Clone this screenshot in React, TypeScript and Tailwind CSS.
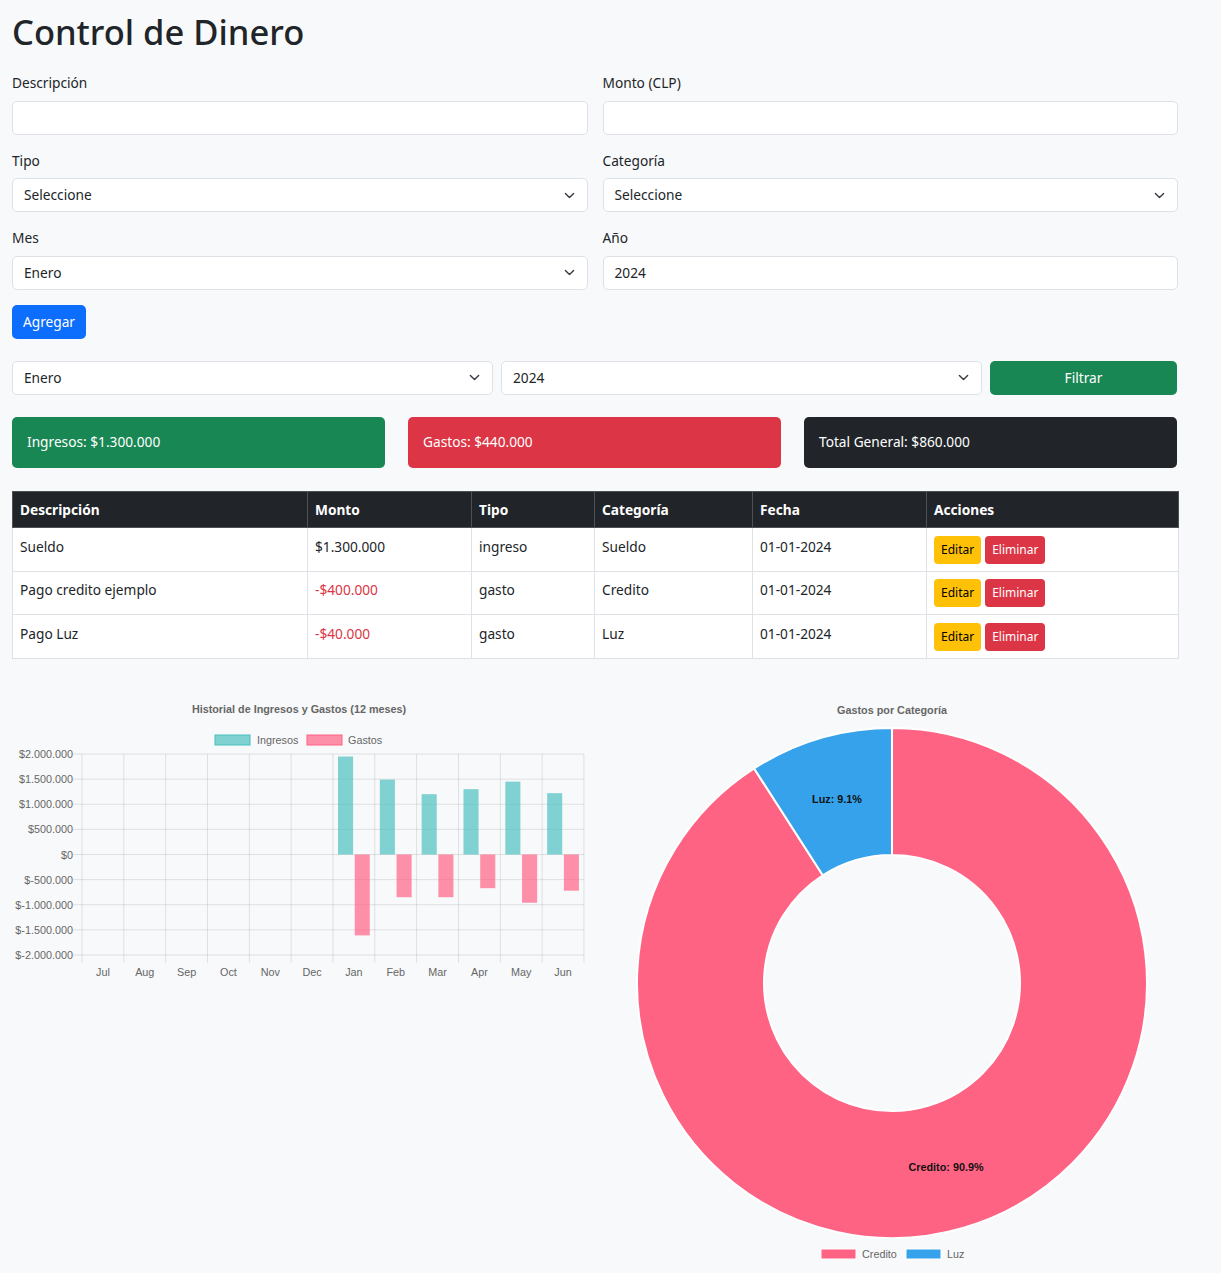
import React from "react";

const months = ["Jul", "Aug", "Sep", "Oct", "Nov", "Dec", "Jan", "Feb", "Mar", "Apr", "May", "Jun"];
const ingresos = [0, 0, 0, 0, 0, 0, 1950000, 1490000, 1200000, 1300000, 1450000, 1220000];
const gastos = [0, 0, 0, 0, 0, 0, 1610000, 850000, 850000, 670000, 960000, 720000];
const yTicks = ["$2.000.000", "$1.500.000", "$1.000.000", "$500.000", "$0", "$-500.000", "$-1.000.000", "$-1.500.000", "$-2.000.000"];

const rows = [
    { desc: "Sueldo", monto: "$1.300.000", neg: false, tipo: "ingreso", cat: "Sueldo", fecha: "01-01-2024" },
    { desc: "Pago credito ejemplo", monto: "-$400.000", neg: true, tipo: "gasto", cat: "Credito", fecha: "01-01-2024" },
    { desc: "Pago Luz", monto: "-$40.000", neg: true, tipo: "gasto", cat: "Luz", fecha: "01-01-2024" },
];

function Chevron() {
    return (
        <svg width="11" height="11" viewBox="0 0 16 16" className="shrink-0">
            <path d="M2 5l6 6 6-6" fill="none" stroke="#343a40" strokeWidth="2" strokeLinecap="round" strokeLinejoin="round" />
        </svg>
    );
}

function Field({ label, children }: { label: string; children: React.ReactNode }) {
    return (
        <div className="mb-[15px]">
            <label className="block text-[13.7px] leading-[21.6px] mb-[7px]">{label}</label>
            {children}
        </div>
    );
}

function Select({ value, className = "" }: { value: string; className?: string }) {
    return (
        <div className={`h-[34px] bg-white border border-[#dee2e6] rounded-[5px] flex items-center justify-between pl-[11px] pr-[12px] text-[13.7px] ${className}`}>
            <span>{value}</span>
            <Chevron />
        </div>
    );
}

function Input({ value = "" }: { value?: string }) {
    return (
        <div className="h-[34px] bg-white border border-[#dee2e6] rounded-[5px] flex items-center px-[11px] text-[13.7px]">
            {value}
        </div>
    );
}

function BarChart() {
    const left = 70;
    const step = 41.83;
    const zero = 154.5;
    const y = (v: number) => zero - (v / 500000) * 25.125;
    const font = "'Liberation Sans', Arial, sans-serif";
    return (
        <svg width="575" height="290" style={{ fontFamily: font }}>
            <text x="287" y="13" textAnchor="middle" fontSize="10.8" fontWeight="bold" fill="#666">
                Historial de Ingresos y Gastos (12 meses)
            </text>
            <rect x="203" y="35" width="35" height="10" fill="rgba(75,192,192,0.7)" stroke="rgb(75,192,192)" strokeWidth="1" />
            <text x="245" y="44" fontSize="10.8" fill="#666">Ingresos</text>
            <rect x="295" y="35" width="35" height="10" fill="rgba(255,99,132,0.7)" stroke="rgb(255,99,132)" strokeWidth="1" />
            <text x="336" y="44" fontSize="10.8" fill="#666">Gastos</text>
            {yTicks.map((t, i) => {
                const yy = 54 + i * 25.125;
                return (
                    <g key={t}>
                        <line x1="61" x2="572" y1={yy} y2={yy} stroke="rgba(0,0,0,0.1)" />
                        <text x="61" y={yy + 4} textAnchor="end" fontSize="10.8" fill="#666">{t}</text>
                    </g>
                );
            })}
            {Array.from({ length: 13 }).map((_, i) => (
                <line key={i} x1={left + step * i} x2={left + step * i} y1="54" y2="263" stroke="rgba(0,0,0,0.1)" />
            ))}
            {months.map((m, i) => {
                const c0 = left + step * i;
                const w = 15.06;
                const b1 = c0 + step * 0.1;
                const b2 = b1 + step * 0.4;
                return (
                    <g key={m}>
                        {ingresos[i] > 0 && (
                            <rect x={b1 + (step * 0.4 - w) / 2} y={y(ingresos[i])} width={w} height={zero - y(ingresos[i])} fill="rgba(75,192,192,0.7)" />
                        )}
                        {gastos[i] > 0 && (
                            <rect x={b2 + (step * 0.4 - w) / 2} y={zero} width={w} height={y(-gastos[i]) - zero} fill="rgba(255,99,132,0.7)" />
                        )}
                        <text x={c0 + step / 2} y="276" textAnchor="middle" fontSize="10.8" fill="#666">{m}</text>
                    </g>
                );
            })}
        </svg>
    );
}

function arcPath(cx: number, cy: number, r: number, R: number, a0: number, a1: number) {
    const rad = (d: number) => (d * Math.PI) / 180;
    const pt = (rr: number, a: number) => [cx + rr * Math.sin(rad(a)), cy - rr * Math.cos(rad(a))];
    const large = a1 - a0 > 180 ? 1 : 0;
    const [x0, y0] = pt(R, a0);
    const [x1, y1] = pt(R, a1);
    const [x2, y2] = pt(r, a1);
    const [x3, y3] = pt(r, a0);
    return `M${x0} ${y0} A${R} ${R} 0 ${large} 1 ${x1} ${y1} L${x2} ${y2} A${r} ${r} 0 ${large} 0 ${x3} ${y3} Z`;
}

function Donut() {
    const font = "'Liberation Sans', Arial, sans-serif";
    const split = 360 * (400000 / 440000);
    return (
        <svg width="575" height="565" style={{ fontFamily: font }}>
            <text x="290" y="14" textAnchor="middle" fontSize="10.8" fontWeight="bold" fill="#666">
                Gastos por Categoría
            </text>
            <path d={arcPath(290, 283, 128, 255, 0, split)} fill="#ff6384" stroke="#fff" strokeWidth="2" />
            <path d={arcPath(290, 283, 128, 255, split, 360)} fill="#36a2eb" stroke="#fff" strokeWidth="2" />
            <text x="235" y="103" textAnchor="middle" fontSize="10.8" fontWeight="bold" fill="#111">Luz: 9.1%</text>
            <text x="344" y="471" textAnchor="middle" fontSize="10.8" fontWeight="bold" fill="#111">Credito: 90.9%</text>
            <rect x="219" y="549" width="35" height="10" fill="#ff6384" stroke="#fff" />
            <text x="260" y="558" fontSize="10.8" fill="#666">Credito</text>
            <rect x="304" y="549" width="35" height="10" fill="#36a2eb" stroke="#fff" />
            <text x="345" y="558" fontSize="10.8" fill="#666">Luz</text>
        </svg>
    );
}

export default function App() {
    const td = "border border-[#dee2e6] px-[7px] py-[7.25px] leading-[21.6px]";
    return (
        <div className="min-h-screen bg-[#f8f9fa] text-[#212529] font-['Noto_Sans',sans-serif] pb-2">
            <div className="w-[1166px] ml-3">
                <h1 className="text-[34.5px] font-medium leading-[43px] pt-[10px] mb-[19px]">Control de Dinero</h1>

                <div className="grid grid-cols-2 gap-x-[15px]">
                    <Field label="Descripción"><Input /></Field>
                    <Field label="Monto (CLP)"><Input /></Field>
                    <Field label="Tipo"><Select value="Seleccione" /></Field>
                    <Field label="Categoría"><Select value="Seleccione" /></Field>
                    <Field label="Mes"><Select value="Enero" /></Field>
                    <Field label="Año"><Input value="2024" /></Field>
                </div>

                <button className="h-[34px] px-[11px] bg-[#0d6efd] text-white text-[13.7px] rounded-[5px]">Agregar</button>

                <div className="flex gap-2 mt-[22px]">
                    <Select value="Enero" className="w-[481px]" />
                    <Select value="2024" className="w-[481px]" />
                    <button className="w-[187px] h-[34px] bg-[#198754] text-white text-[13.7px] rounded-[5px]">Filtrar</button>
                </div>

                <div className="flex gap-[23px] mt-[22px]">
                    <div className="w-[373px] h-[51px] rounded-[5px] bg-[#198754] text-white text-[13.7px] flex items-center px-[15px]">Ingresos: $1.300.000</div>
                    <div className="w-[373px] h-[51px] rounded-[5px] bg-[#dc3545] text-white text-[13.7px] flex items-center px-[15px]">Gastos: $440.000</div>
                    <div className="w-[373px] h-[51px] rounded-[5px] bg-[#212529] text-white text-[13.7px] flex items-center px-[15px]">Total General: $860.000</div>
                </div>

                <table className="mt-[23px] w-[1166px] border-collapse text-[13.7px] table-fixed">
                    <colgroup>
                        <col className="w-[295px]" />
                        <col className="w-[164px]" />
                        <col className="w-[123px]" />
                        <col className="w-[158px]" />
                        <col className="w-[174px]" />
                        <col className="w-[252px]" />
                    </colgroup>
                    <thead>
                        <tr className="bg-[#212529] text-white">
                            {["Descripción", "Monto", "Tipo", "Categoría", "Fecha", "Acciones"].map((h) => (
                                <th key={h} className="text-left font-bold border border-[#4d5154] px-[7px] py-[7px] leading-[21.6px]">{h}</th>
                            ))}
                        </tr>
                    </thead>
                    <tbody className="bg-white">
                        {rows.map((r) => (
                            <tr key={r.desc} className="align-top">
                                <td className={td}>{r.desc}</td>
                                <td className={`${td} ${r.neg ? "text-[#dc3545]" : ""}`}>{r.monto}</td>
                                <td className={td}>{r.tipo}</td>
                                <td className={td}>{r.cat}</td>
                                <td className={td}>{r.fecha}</td>
                                <td className="border border-[#dee2e6] px-[7px] py-[7.25px]">
                                    <div className="flex gap-1">
                                        <button className="h-[28px] px-[7px] rounded-[4px] bg-[#ffc107] text-[#000] text-[12px]">Editar</button>
                                        <button className="h-[28px] px-[7px] rounded-[4px] bg-[#dc3545] text-white text-[12px]">Eliminar</button>
                                    </div>
                                </td>
                            </tr>
                        ))}
                    </tbody>
                </table>

                <div className="flex gap-[15px] mt-[41px]">
                    <BarChart />
                    <Donut />
                </div>
            </div>
        </div>
    );
}
